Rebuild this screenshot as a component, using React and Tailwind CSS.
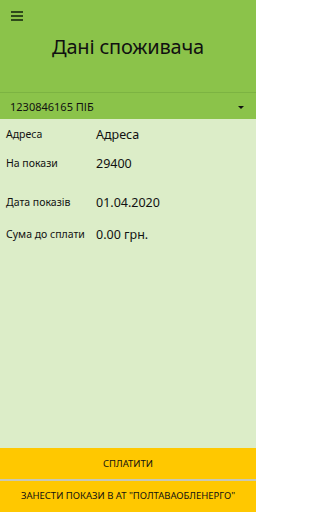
import { useState } from "react";

const rows = [
  { label: "Адреса", value: "Адреса", cls: "h-[28px]" },
  { label: "На покази", value: "29400", cls: "h-[30px]" },
  { label: "Дата показів", value: "01.04.2020", cls: "h-[30px] mt-[9px]" },
  { label: "Сума до сплати", value: "0.00 грн.", cls: "h-[30px] mt-[2px]" },
];

function App() {
  const [account] = useState("1230846165 ПІБ");

  return (
    <div className="flex flex-col h-[512px] w-[256px] bg-[#dcedc8] text-[#111] font-['Noto_Sans',sans-serif]">
      {/* header */}
      <header className="h-[93px] bg-[#8bc34a] border-b border-[#7cb342] relative">
        <button className="absolute left-[11px] top-[11px] flex flex-col gap-[2.5px]">
          <span className="block w-[12px] h-[1.5px] bg-[#2e4a1a]" />
          <span className="block w-[12px] h-[1.5px] bg-[#2e4a1a]" />
          <span className="block w-[12px] h-[1.5px] bg-[#2e4a1a]" />
        </button>
        <h1 className="pt-[32px] text-center text-[20px] leading-[30px] tracking-[-0.2px]">Дані споживача</h1>
      </header>

      {/* account dropdown */}
      <div className="h-[26px] bg-[#8bc34a] flex items-center justify-between pl-[10px] pr-[12px] pt-[2px]">
        <span className="text-[11px]">{account}</span>
        <span className="w-0 h-0 border-l-[3px] border-r-[3px] border-t-[3px] border-l-transparent border-r-transparent border-t-[#111]" />
      </div>

      {/* details */}
      <main className="flex-1 pt-[2px]">
        {rows.map((r) => (
          <div key={r.label} className={`flex items-center ${r.cls}`}>
            <span className="w-[96px] pl-[6px] text-[10.5px]">{r.label}</span>
            <span className="text-[12.5px]">{r.value}</span>
          </div>
        ))}
      </main>

      {/* actions */}
      <button className="h-[31px] bg-[#ffc800] text-[9.5px] uppercase pt-[1px]">Сплатити</button>
      <div className="h-[2px] bg-[#c8c8b4]" />
      <button className="h-[31px] bg-[#ffc800] text-[9.5px] uppercase">Занести покази в АТ "Полтаваобленерго"</button>
    </div>
  );
}

export default App;
